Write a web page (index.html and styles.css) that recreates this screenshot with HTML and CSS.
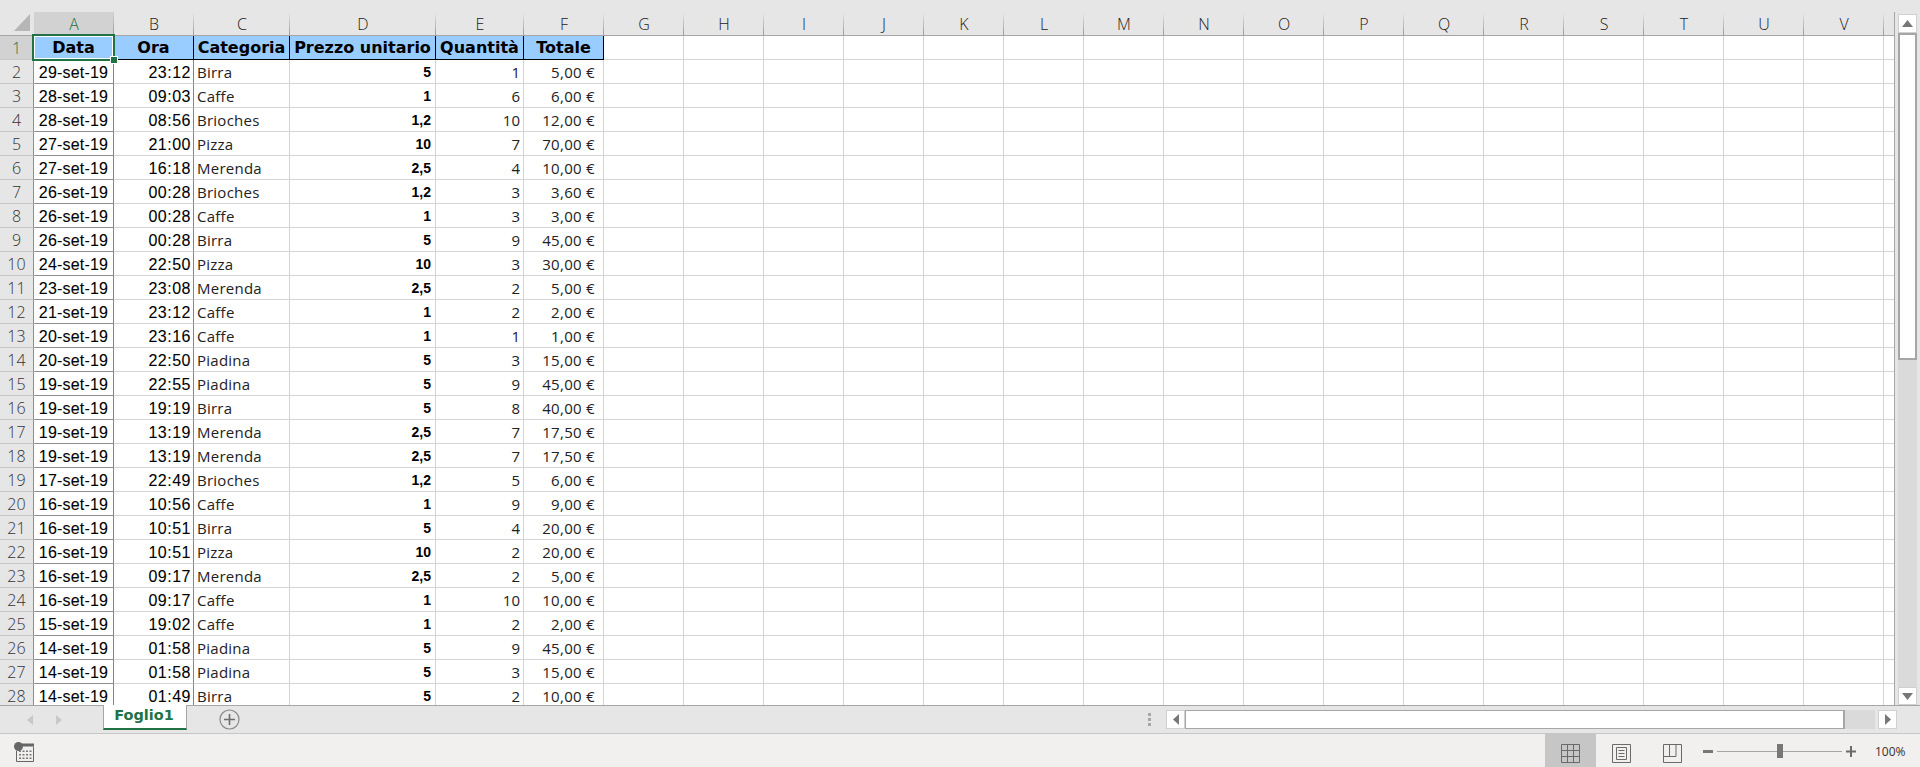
FILE: index.html
```html
<!DOCTYPE html>
<html lang="it">
<head>
<meta charset="utf-8">
<title>Foglio1</title>
<link rel="stylesheet" href="styles.css">
</head>
<body>
<div class="app">
  <div class="top-strip"></div>
  <div class="main">
    <div class="grid-wrap">
      <table class="sheet">
        <colgroup>
          <col class="c-row"><col class="c-80"><col class="c-80"><col class="c-c"><col class="c-d"><col class="c-e"><col class="c-80">
          <col class="c-80"><col class="c-80"><col class="c-80"><col class="c-80"><col class="c-80"><col class="c-80"><col class="c-80"><col class="c-80"><col class="c-80"><col class="c-80"><col class="c-80"><col class="c-80"><col class="c-80"><col class="c-80"><col class="c-80"><col class="c-80"><col class="c-w">
        </colgroup>
        <thead>
          <tr>
            <th class="corner"><svg class="corner-tri" width="16" height="17" viewBox="0 0 16 17"><path d="M16 0V17H0Z"/></svg></th>
            <th class="sel">A</th><th>B</th><th>C</th><th>D</th><th>E</th><th>F</th><th>G</th><th>H</th><th>I</th><th>J</th><th>K</th><th>L</th><th>M</th><th>N</th><th>O</th><th>P</th><th>Q</th><th>R</th><th>S</th><th>T</th><th>U</th><th>V</th><th class="last"></th>
          </tr>
        </thead>
        <tbody>
          <tr class="titles"><th class="sel">1</th><td class="active">Data<span class="cursor"></span></td><td class="o">Ora</td><td>Categoria</td><td>Prezzo unitario</td><td>Quantità</td><td>Totale</td><td class="fill" colspan="17"></td></tr>
          <tr><th>2</th><td class="d">29-set-19</td><td class="t">23:12</td><td class="k">Birra</td><td class="p">5</td><td class="q">1</td><td class="m">5,00 €</td><td class="fill" colspan="17"></td></tr>
          <tr><th>3</th><td class="d">28-set-19</td><td class="t">09:03</td><td class="k">Caffe</td><td class="p">1</td><td class="q">6</td><td class="m">6,00 €</td><td class="fill" colspan="17"></td></tr>
          <tr><th>4</th><td class="d">28-set-19</td><td class="t">08:56</td><td class="k">Brioches</td><td class="p">1,2</td><td class="q">10</td><td class="m">12,00 €</td><td class="fill" colspan="17"></td></tr>
          <tr><th>5</th><td class="d">27-set-19</td><td class="t">21:00</td><td class="k">Pizza</td><td class="p">10</td><td class="q">7</td><td class="m">70,00 €</td><td class="fill" colspan="17"></td></tr>
          <tr><th>6</th><td class="d">27-set-19</td><td class="t">16:18</td><td class="k">Merenda</td><td class="p">2,5</td><td class="q">4</td><td class="m">10,00 €</td><td class="fill" colspan="17"></td></tr>
          <tr><th>7</th><td class="d">26-set-19</td><td class="t">00:28</td><td class="k">Brioches</td><td class="p">1,2</td><td class="q">3</td><td class="m">3,60 €</td><td class="fill" colspan="17"></td></tr>
          <tr><th>8</th><td class="d">26-set-19</td><td class="t">00:28</td><td class="k">Caffe</td><td class="p">1</td><td class="q">3</td><td class="m">3,00 €</td><td class="fill" colspan="17"></td></tr>
          <tr><th>9</th><td class="d">26-set-19</td><td class="t">00:28</td><td class="k">Birra</td><td class="p">5</td><td class="q">9</td><td class="m">45,00 €</td><td class="fill" colspan="17"></td></tr>
          <tr><th>10</th><td class="d">24-set-19</td><td class="t">22:50</td><td class="k">Pizza</td><td class="p">10</td><td class="q">3</td><td class="m">30,00 €</td><td class="fill" colspan="17"></td></tr>
          <tr><th>11</th><td class="d">23-set-19</td><td class="t">23:08</td><td class="k">Merenda</td><td class="p">2,5</td><td class="q">2</td><td class="m">5,00 €</td><td class="fill" colspan="17"></td></tr>
          <tr><th>12</th><td class="d">21-set-19</td><td class="t">23:12</td><td class="k">Caffe</td><td class="p">1</td><td class="q">2</td><td class="m">2,00 €</td><td class="fill" colspan="17"></td></tr>
          <tr><th>13</th><td class="d">20-set-19</td><td class="t">23:16</td><td class="k">Caffe</td><td class="p">1</td><td class="q">1</td><td class="m">1,00 €</td><td class="fill" colspan="17"></td></tr>
          <tr><th>14</th><td class="d">20-set-19</td><td class="t">22:50</td><td class="k">Piadina</td><td class="p">5</td><td class="q">3</td><td class="m">15,00 €</td><td class="fill" colspan="17"></td></tr>
          <tr><th>15</th><td class="d">19-set-19</td><td class="t">22:55</td><td class="k">Piadina</td><td class="p">5</td><td class="q">9</td><td class="m">45,00 €</td><td class="fill" colspan="17"></td></tr>
          <tr><th>16</th><td class="d">19-set-19</td><td class="t">19:19</td><td class="k">Birra</td><td class="p">5</td><td class="q">8</td><td class="m">40,00 €</td><td class="fill" colspan="17"></td></tr>
          <tr><th>17</th><td class="d">19-set-19</td><td class="t">13:19</td><td class="k">Merenda</td><td class="p">2,5</td><td class="q">7</td><td class="m">17,50 €</td><td class="fill" colspan="17"></td></tr>
          <tr><th>18</th><td class="d">19-set-19</td><td class="t">13:19</td><td class="k">Merenda</td><td class="p">2,5</td><td class="q">7</td><td class="m">17,50 €</td><td class="fill" colspan="17"></td></tr>
          <tr><th>19</th><td class="d">17-set-19</td><td class="t">22:49</td><td class="k">Brioches</td><td class="p">1,2</td><td class="q">5</td><td class="m">6,00 €</td><td class="fill" colspan="17"></td></tr>
          <tr><th>20</th><td class="d">16-set-19</td><td class="t">10:56</td><td class="k">Caffe</td><td class="p">1</td><td class="q">9</td><td class="m">9,00 €</td><td class="fill" colspan="17"></td></tr>
          <tr><th>21</th><td class="d">16-set-19</td><td class="t">10:51</td><td class="k">Birra</td><td class="p">5</td><td class="q">4</td><td class="m">20,00 €</td><td class="fill" colspan="17"></td></tr>
          <tr><th>22</th><td class="d">16-set-19</td><td class="t">10:51</td><td class="k">Pizza</td><td class="p">10</td><td class="q">2</td><td class="m">20,00 €</td><td class="fill" colspan="17"></td></tr>
          <tr><th>23</th><td class="d">16-set-19</td><td class="t">09:17</td><td class="k">Merenda</td><td class="p">2,5</td><td class="q">2</td><td class="m">5,00 €</td><td class="fill" colspan="17"></td></tr>
          <tr><th>24</th><td class="d">16-set-19</td><td class="t">09:17</td><td class="k">Caffe</td><td class="p">1</td><td class="q">10</td><td class="m">10,00 €</td><td class="fill" colspan="17"></td></tr>
          <tr><th>25</th><td class="d">15-set-19</td><td class="t">19:02</td><td class="k">Caffe</td><td class="p">1</td><td class="q">2</td><td class="m">2,00 €</td><td class="fill" colspan="17"></td></tr>
          <tr><th>26</th><td class="d">14-set-19</td><td class="t">01:58</td><td class="k">Piadina</td><td class="p">5</td><td class="q">9</td><td class="m">45,00 €</td><td class="fill" colspan="17"></td></tr>
          <tr><th>27</th><td class="d">14-set-19</td><td class="t">01:58</td><td class="k">Piadina</td><td class="p">5</td><td class="q">3</td><td class="m">15,00 €</td><td class="fill" colspan="17"></td></tr>
          <tr><th>28</th><td class="d">14-set-19</td><td class="t">01:49</td><td class="k">Birra</td><td class="p">5</td><td class="q">2</td><td class="m">10,00 €</td><td class="fill" colspan="17"></td></tr>
        </tbody>
      </table>
    </div>
    <div class="vscroll">
      <div class="vbtn"><svg width="11" height="7" viewBox="0 0 11 7"><path class="g" d="M5.500 0 11 7H0Z"/></svg></div>
      <div class="vthumb"></div>
      <div class="vtrack"></div>
      <div class="vbtn end"><svg width="11" height="7" viewBox="0 0 11 7"><path class="g" d="M0 0H11L5.500 7Z"/></svg></div>
    </div>
  </div>
  <div class="tabbar">
    <div class="nav">
      <svg width="6" height="10" viewBox="0 0 6 10"><path class="nav-arrow" d="M6 0V10L0 5Z"/></svg>
      <svg width="6" height="10" viewBox="0 0 6 10"><path class="nav-arrow" d="M0 0V10L6 5Z"/></svg>
    </div>
    <div class="tab">Foglio1</div>
    <svg class="add" width="21" height="21" viewBox="0 0 21 21"><circle cx="10.500" cy="10.500" r="9.500" fill="none" stroke="#8a8a8a" stroke-width="1.200"/><path d="M10.500 5v11M5 10.500h11" stroke="#6e6e6e" stroke-width="1.600"/></svg>
    <div class="split"><i></i><i></i><i></i></div>
    <div class="hscroll">
      <div class="hbtn"><svg width="6" height="11" viewBox="0 0 6 11"><path class="g" d="M6 0V11L0 5.500Z"/></svg></div>
      <div class="hthumb"></div>
      <div class="htrack"></div>
      <div class="hbtn end"><svg width="6" height="11" viewBox="0 0 6 11"><path class="g" d="M0 0V11L6 5.500Z"/></svg></div>
    </div>
  </div>
  <div class="status">
    <svg class="macro" width="20" height="20" viewBox="0 0 20 20">
      <circle cx="4.500" cy="4.500" r="4.500" fill="#666"/>
      <path d="M8 1.500h12v3H8z" fill="#666"/>
      <path d="M2.500 9v10.500h17V4.500" fill="none" stroke="#666"/>
      <path d="M5 8.500h2v1.500H5zM8.500 8.500h2v1.500h-2zM12 8.500h2v1.500h-2zM15.500 8.500h2v1.500h-2zM5 12h2v1.500H5zM8.500 12h2v1.500h-2zM12 12h2v1.500h-2zM15.500 12h2v1.500h-2zM5 15.500h2V17H5zM8.500 15.500h2V17h-2zM12 15.500h2V17h-2zM15.500 15.500h2V17h-2z" fill="#777"/>
    </svg>
    <div class="views">
      <div class="view on"><svg width="19" height="19" viewBox="0 0 19 19"><path d="M.5.500h18v18H.5zM6.500.500v18M12.500.500v18M.5 6.500h18M.5 12.500h18" fill="none" stroke="#6a6a6a"/></svg></div>
      <div class="view"><svg width="19" height="19" viewBox="0 0 19 19"><path d="M.5.500h18v18H.5zM4.500 3.500h10v12h-10zM6.500 6.500h6M6.500 9.500h6M6.500 12.500h6" fill="none" stroke="#6a6a6a"/></svg></div>
      <div class="view"><svg width="19" height="19" viewBox="0 0 19 19"><path d="M.5.500h18v18H.5zM.5 12.500h12.500V.500M6.500.500v12" fill="none" stroke="#6a6a6a"/></svg></div>
    </div>
    <div class="zoom">
      <svg width="10" height="3" viewBox="0 0 10 3"><path d="M0 0h10v3H0z" fill="#777"/></svg>
      <div class="slider"><span class="knob"></span></div>
      <svg width="10" height="11" viewBox="0 0 10 11"><path d="M0 4.500h10v2H0zM4 0h2v11H4z" fill="#6a6a6a"/></svg>
    </div>
    <div class="pct">100%</div>
  </div>
</div>
</body>
</html>
```

FILE: styles.css
```css
* { box-sizing: border-box; }
html, body { margin: 0; height: 767px; overflow: hidden; }
body { background: #e6e6e6; font-family: "Open Sans", "Liberation Sans", sans-serif; color: #222; }
.app { display: flex; flex-direction: column; height: 767px; }
.top-strip { height: 12px; flex: none; background: #e6e6e6; }

.main { display: flex; height: 693px; flex: none; }
.grid-wrap { width: 1895px; flex: none; height: 693px; overflow: hidden; border-right: 1px solid #a6a6a6; }
.sheet { border-collapse: separate; border-spacing: 0; table-layout: fixed; width: 1894px; }
.c-row { width: 34px; }
.c-80 { width: 80px; }
.c-c { width: 96px; }
.c-d { width: 146px; }
.c-e { width: 88px; }
.c-w { width: 10px; }

thead th {
  height: 24px; padding: 0; font-weight: 300; font-size: 16px; color: #222;
  background: linear-gradient(to bottom, #e6e6e6, #9a9a9a) right / 1px 100% no-repeat, #e6e6e6;
  border-bottom: 1px solid #a6a6a6;
}
thead th.corner { background: #e6e6e6; text-align: left; padding: 2px 0 0 14px; vertical-align: top; }
.corner-tri { display: block; fill: #b6b6b6; }
thead th.sel { background: linear-gradient(to bottom, #d2d2d2, #9a9a9a) right / 1px 100% no-repeat, #d2d2d2; color: #217346; }
thead th.last { background: #e6e6e6; }

tbody tr { height: 24px; }
tbody th {
  height: 24px; padding: 0; font-weight: 300; font-size: 16px; color: #333;
  background: #e6e6e6; border-bottom: 1px solid #c8c8c8; border-right: 1px solid #8e8e8e;
}
tbody th.sel { background: #d2d2d2; color: #217346; }
tbody td {
  height: 24px; padding: 0 3px; background: #fff; white-space: nowrap; overflow: hidden;
  border-right: 1px solid #d4d4d4; border-bottom: 1px solid #d4d4d4; font-size: 15px;
}
tbody td.fill {
  padding: 0; border: 0; border-bottom: 1px solid #d4d4d4;
  background: linear-gradient(to left, #d4d4d4 1px, transparent 1px) left top / 80px 100%, #fff;
}

.titles td {
  background: #99ccff; border-right: 1px solid #000; border-bottom: 1px solid #000;
  font: 700 16px "DejaVu Sans", sans-serif; color: #000; text-align: center; padding: 0;
}
.titles td.active { position: relative; overflow: visible; border-right-color: transparent; }
.titles td.active::before {
  content: ""; position: absolute; left: -2px; top: -2px; right: -2px; bottom: -2px;
  border: 2px solid #217346; box-shadow: inset 0 0 0 1px #fff;
}
.cursor { position: absolute; right: -4px; bottom: -4px; width: 6px; height: 6px; background: #217346; border: 1px solid #fff; box-sizing: content-box; margin: -1px; }

td.d, td.t { font: 400 16px "Liberation Sans Narrow", "Liberation Sans", sans-serif; color: #000; -webkit-text-stroke: .08px #000; padding-top: 2px; }
td.d { text-align: center; border-right-color: #858585; border-bottom-color: #8e8e8e; padding-left: 0; padding-right: 0; letter-spacing: .2px; }
td.t { text-align: right; border-right-color: #858585; letter-spacing: .5px; padding-right: 2px; }
td.k { font-weight: 400; color: #222; letter-spacing: .25px; }
td.p { text-align: right; font: 700 14px "Liberation Sans Narrow", "Liberation Sans", sans-serif; color: #000; padding-right: 4px; }
td.q { text-align: right; color: #222; }
td.m { text-align: right; padding-right: 8px; color: #222; letter-spacing: .3px; }

.vscroll { flex: 1; display: flex; flex-direction: column; padding: 2px 3px 0; background: #e6e6e6; }
.vbtn { height: 19px; flex: none; background: #fff; border: 1px solid #d0d0d0; display: flex; align-items: center; justify-content: center; }
.vbtn.end { height: 18px; }
.g { fill: #777; }
.vthumb { height: 327px; flex: none; background: #fff; border: 2px solid #a6a6a6; }
.vtrack { flex: 1; background: #dadada; }

.tabbar { height: 29px; flex: none; display: flex; align-items: flex-start; background: #e6e6e6; border-top: 1px solid #a6a6a6; border-bottom: 1px solid #c6c6c6; }
.nav { width: 103px; flex: none; height: 27px; display: flex; align-items: center; gap: 23px; padding-left: 27px; }
.nav-arrow { fill: #c8c8c8; }
.tab {
  width: 84px; height: 25px; flex: none; margin-top: -1px; padding-right: 2px; background: #fff; color: #217346;
  font: 700 14.5px/21px "DejaVu Sans", sans-serif; text-align: center;
  border-left: 1px solid #a6a6a6; border-right: 1px solid #a6a6a6; border-bottom: 2px solid #217346;
}
.add { flex: none; margin: 3px 0 0 32px; }
.split { display: flex; flex-direction: column; gap: 2px; width: 3px; flex: none; margin: 7px 0 0 908px; }
.split i { height: 3px; background: #a6a6a6; }
.hscroll { display: flex; margin: 4px 0 0 15px; height: 19px; flex: none; }
.hbtn { width: 19px; background: #fff; border: 1px solid #d0d0d0; display: flex; align-items: center; justify-content: center; }
.hbtn.end { margin-left: 3px; }
.hthumb { width: 660px; background: #fff; border: 1px solid #a6a6a6; border-width: 1px 2px 1px 1px; }
.htrack { width: 30px; background: #dadada; }

.status { height: 33px; flex: none; display: flex; background: #f1f0ef; }
.macro { margin: 8px 0 0 14px; flex: none; }
.views { display: flex; margin-left: 1511px; flex: none; }
.view { width: 51px; height: 33px; display: flex; align-items: flex-start; justify-content: center; padding-top: 10px; }
.view.on { background: #c6c6c6; }
.zoom { display: flex; align-items: center; gap: 4px; height: 33px; padding: 0 0 0 5px; margin-top: 1px; flex: none; }
.slider { width: 125px; height: 1px; background: #a6a6a6; position: relative; }
.knob { position: absolute; left: 60px; top: -7px; width: 6px; height: 14px; background: #777; }
.pct { margin-left: 19px; font-size: 12px; line-height: 35px; color: #333; flex: none; }
```
